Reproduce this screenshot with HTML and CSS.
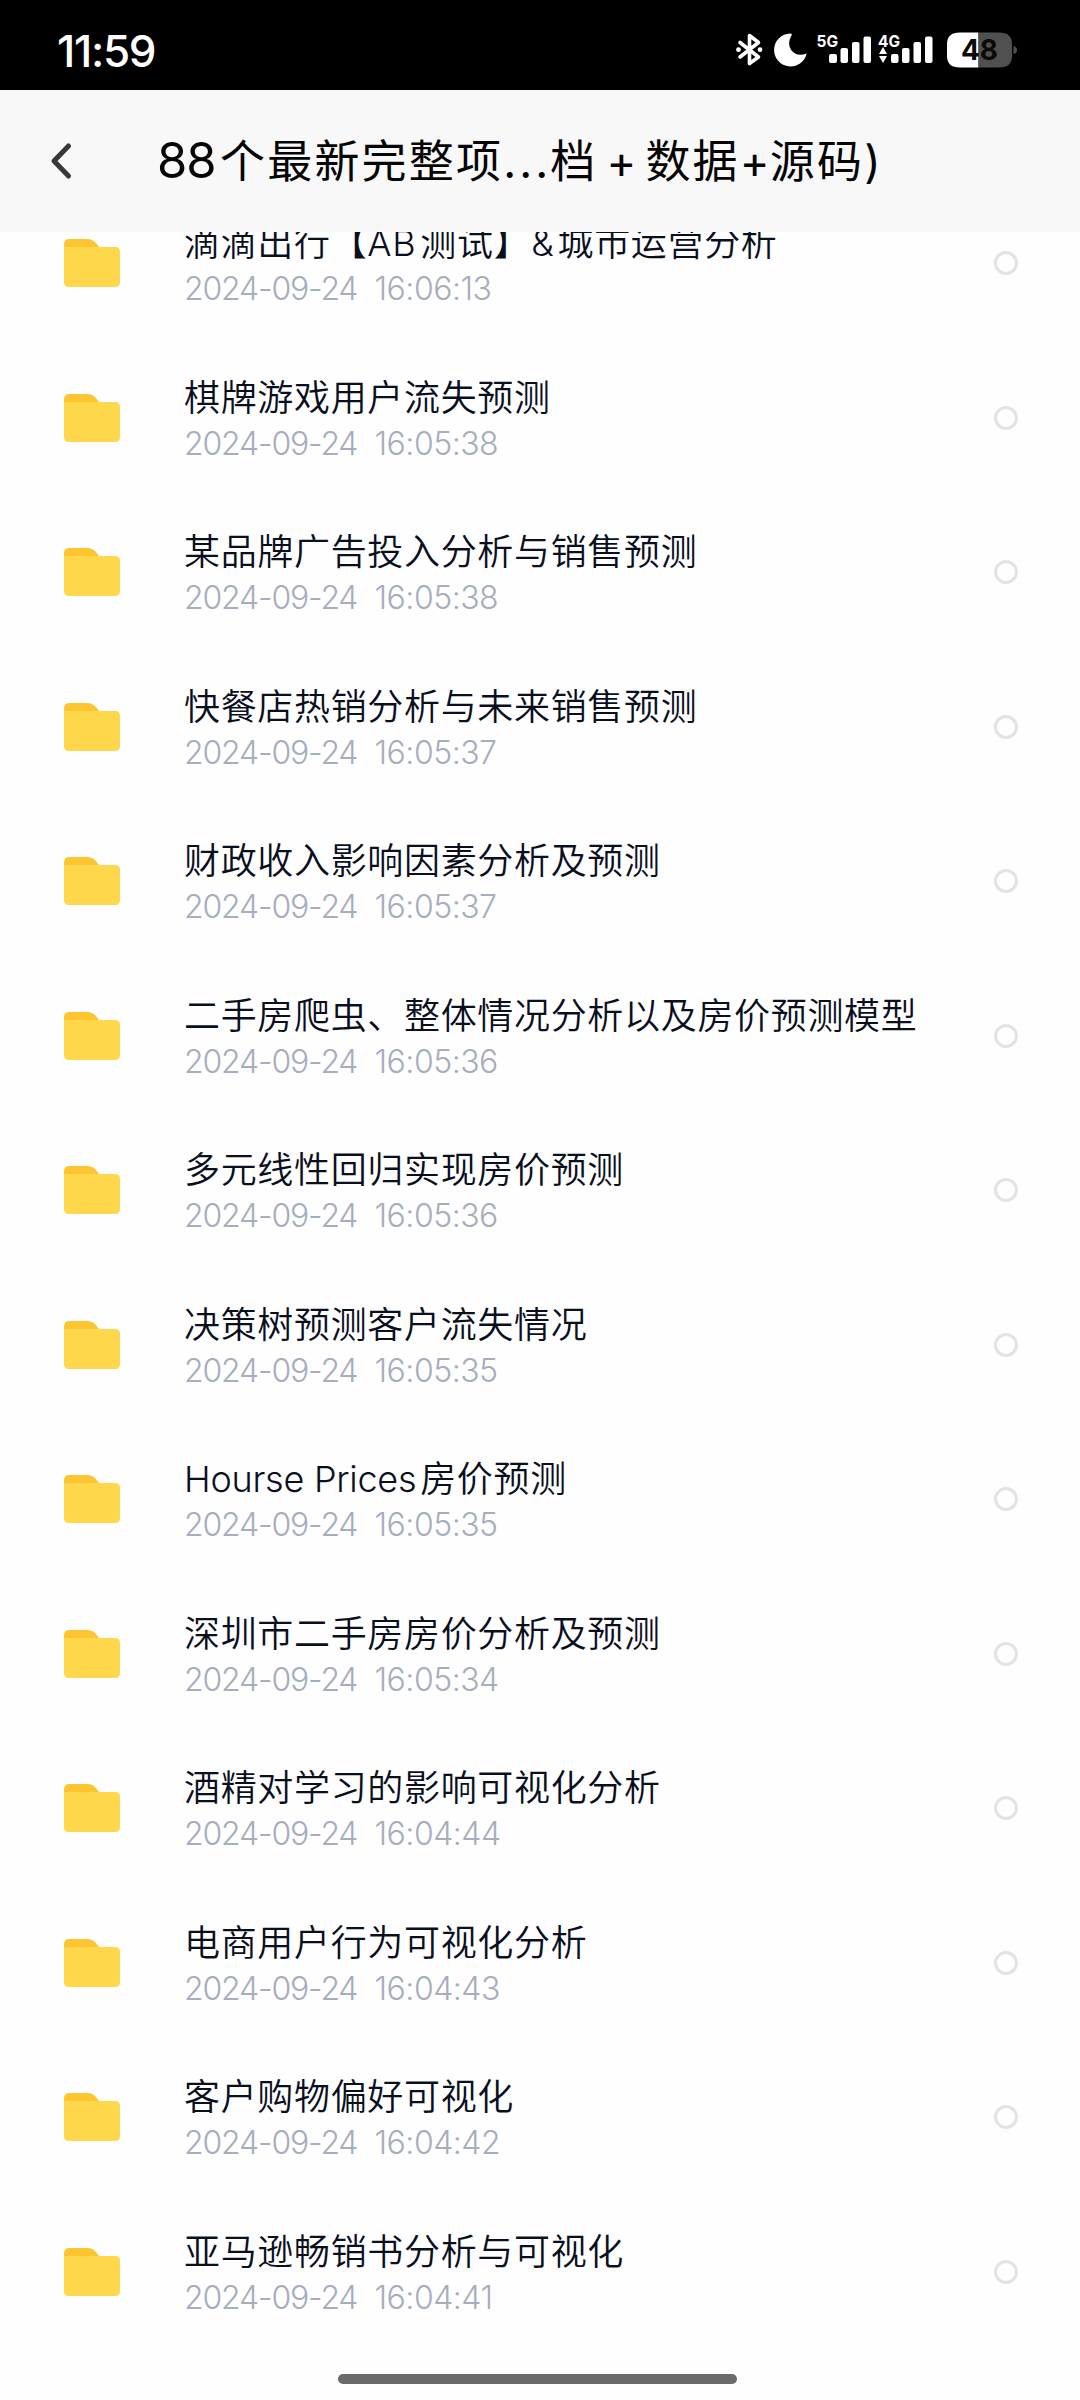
FILE: index.html
```html
<!DOCTYPE html>
<html lang="zh-CN">
<head>
<meta charset="utf-8">
<title>88个最新完整项目</title>
<link rel="stylesheet" href="styles.css">
</head>
<body>
<svg class="defs" width="0" height="0" aria-hidden="true">
  <symbol id="folder" viewBox="0 0 56 48">
    <path fill="#fdc630" d="M0 14V5.500Q0 0 5.500 0H24Q28 0 31 3L36 9V14Z"/>
    <path fill="#fed74b" d="M0 8H51Q56 8 56 13V43Q56 48 51 48H5Q0 48 0 43Z"/>
  </symbol>
</svg>
<div class="screen">
  <div class="status">
    <span class="clock">11:59</span>
    <svg class="indicators" width="300" height="40" viewBox="736 30 300 40">
      <g fill="none" stroke="#fff" stroke-width="3.600" stroke-linejoin="round" stroke-linecap="round">
        <path d="M740 42.500L758.500 57L749.500 63.500V35.500L758.500 42.500L740 57"/>
      </g>
      <circle cx="738.500" cy="49.700" r="2.400" fill="#fff"/><circle cx="760" cy="49.700" r="2.400" fill="#fff"/>
      <path fill="#fff" d="M790 33.500A16.500 16.500 0 1 0 806.700 53.500Q797 57 791.500 50.500Q786.500 43.500 791.500 35.500Q792.500 33.500 790 33.500Z"/>
      <g fill="#fff">
        <rect x="829" y="54" width="8" height="9" rx="2"/><rect x="840.500" y="48" width="7.500" height="15" rx="2"/><rect x="852" y="42" width="7.500" height="21" rx="2"/><rect x="863.500" y="36.500" width="7.500" height="26.500" rx="2"/>
        <rect x="891" y="54" width="7.500" height="9" rx="2"/><rect x="902" y="48" width="7.500" height="15" rx="2"/><rect x="913.500" y="42" width="7.500" height="21" rx="2"/><rect x="925" y="36.500" width="7.500" height="26.500" rx="2"/>
        <path d="M883 47L887 54H879ZM883 63L887 56H879Z"/>
        <text class="net" x="816.500" y="47" textLength="21.500" lengthAdjust="spacingAndGlyphs">5G</text>
        <text class="net" x="878" y="47" textLength="22" lengthAdjust="spacingAndGlyphs">4G</text>
      </g>
      <path fill="#fff" d="M978.500 32.500H960Q947 32.500 947 44V56Q947 67.500 960 67.500H978.500Z"/>
      <path fill="#505050" d="M978.500 32.500H999Q1012 32.500 1012 44V56Q1012 67.500 999 67.500H978.500Z"/>
      <path fill="#505050" d="M1013.500 46Q1017 47 1017 50T1013.500 54Z"/>
      <text class="level" x="961" y="59.500" textLength="37" lengthAdjust="spacingAndGlyphs">48</text>
    </svg>
  </div>
  <header class="bar">
    <svg class="back" width="24" height="40" viewBox="0 0 24 40"><path d="M19.500 5L5 20L19.500 35" fill="none" stroke="#383838" stroke-width="5" stroke-linecap="round" stroke-linejoin="round"/></svg>
    <h1 class="title"><span class="num">88</span><span>个最新完整项</span><span class="dots">...</span><span>档</span><span class="plus wide">+</span><span>数据</span><span class="plus">+</span><span>源码</span><span class="paren">)</span></h1>
  </header>
  <main class="list">
    <div class="row"><svg class="folder"><use href="#folder"/></svg><div class="info"><div class="name">滴滴出行【<span class="ab">AB</span>测试】<span class="amp">&amp;</span>城市运营分析</div><div class="date"><span>2024-09-24</span><span>16:06:13</span></div></div><i class="pick"></i></div>
    <div class="row"><svg class="folder"><use href="#folder"/></svg><div class="info"><div class="name">棋牌游戏用户流失预测</div><div class="date"><span>2024-09-24</span><span>16:05:38</span></div></div><i class="pick"></i></div>
    <div class="row"><svg class="folder"><use href="#folder"/></svg><div class="info"><div class="name">某品牌广告投入分析与销售预测</div><div class="date"><span>2024-09-24</span><span>16:05:38</span></div></div><i class="pick"></i></div>
    <div class="row"><svg class="folder"><use href="#folder"/></svg><div class="info"><div class="name">快餐店热销分析与未来销售预测</div><div class="date"><span>2024-09-24</span><span>16:05:37</span></div></div><i class="pick"></i></div>
    <div class="row"><svg class="folder"><use href="#folder"/></svg><div class="info"><div class="name">财政收入影响因素分析及预测</div><div class="date"><span>2024-09-24</span><span>16:05:37</span></div></div><i class="pick"></i></div>
    <div class="row"><svg class="folder"><use href="#folder"/></svg><div class="info"><div class="name">二手房爬虫、整体情况分析以及房价预测模型</div><div class="date"><span>2024-09-24</span><span>16:05:36</span></div></div><i class="pick"></i></div>
    <div class="row"><svg class="folder"><use href="#folder"/></svg><div class="info"><div class="name">多元线性回归实现房价预测</div><div class="date"><span>2024-09-24</span><span>16:05:36</span></div></div><i class="pick"></i></div>
    <div class="row"><svg class="folder"><use href="#folder"/></svg><div class="info"><div class="name">决策树预测客户流失情况</div><div class="date"><span>2024-09-24</span><span>16:05:35</span></div></div><i class="pick"></i></div>
    <div class="row"><svg class="folder"><use href="#folder"/></svg><div class="info"><div class="name"><span class="latin">Hourse Prices</span>房价预测</div><div class="date"><span>2024-09-24</span><span>16:05:35</span></div></div><i class="pick"></i></div>
    <div class="row"><svg class="folder"><use href="#folder"/></svg><div class="info"><div class="name">深圳市二手房房价分析及预测</div><div class="date"><span>2024-09-24</span><span>16:05:34</span></div></div><i class="pick"></i></div>
    <div class="row"><svg class="folder"><use href="#folder"/></svg><div class="info"><div class="name">酒精对学习的影响可视化分析</div><div class="date"><span>2024-09-24</span><span>16:04:44</span></div></div><i class="pick"></i></div>
    <div class="row"><svg class="folder"><use href="#folder"/></svg><div class="info"><div class="name">电商用户行为可视化分析</div><div class="date"><span>2024-09-24</span><span>16:04:43</span></div></div><i class="pick"></i></div>
    <div class="row"><svg class="folder"><use href="#folder"/></svg><div class="info"><div class="name">客户购物偏好可视化</div><div class="date"><span>2024-09-24</span><span>16:04:42</span></div></div><i class="pick"></i></div>
    <div class="row"><svg class="folder"><use href="#folder"/></svg><div class="info"><div class="name">亚马逊畅销书分析与可视化</div><div class="date"><span>2024-09-24</span><span>16:04:41</span></div></div><i class="pick"></i></div>
  </main>
  <footer class="nav"><div class="handle"></div></footer>
</div>
</body>
</html>
```
FILE: styles.css
```css
* { box-sizing: border-box; }
body { margin: 0; background: #fff; }
.defs { display: none; }
.screen {
  width: 1080px;
  height: 2400px;
  display: flex;
  flex-direction: column;
  background: #fefefe;
  font-family: Inter, "Noto Sans CJK SC", sans-serif;
  overflow: hidden;
}
.status {
  height: 90px;
  flex: none;
  padding: 0 44px 0 57px;
  display: flex;
  justify-content: space-between;
  align-items: center;
  background: #000;
  color: #fff;
}
.indicators { margin-top: 10px; }
.clock { font-size: 44px; font-weight: 500; line-height: 60px; padding-top: 11px; letter-spacing: -1.300px; }
.net { font-size: 16px; font-weight: 700; }
.level { font-size: 29px; font-weight: 700; fill: #0a0a0a; }
.bar {
  height: 142px;
  flex: none;
  display: flex;
  align-items: center;
  padding-left: 49px;
  background: #f8f8f8;
}
.back { flex: none; }
.title {
  margin: 0 0 0 84px;
  display: flex;
  align-items: baseline;
  font-size: 45px;
  font-weight: 400;
  line-height: 64px;
  letter-spacing: 2.200px;
  white-space: nowrap;
  color: #060606;
}
.num { width: 63px; font-size: 49px; letter-spacing: -1px; }
.dots { width: 47px; letter-spacing: 3px; }
.plus { width: 30px; letter-spacing: 0; }
.wide { width: 48px; text-align: center; }
.paren { letter-spacing: 0; }
.list { flex: none; height: 2118px; overflow: hidden; }
.row {
  height: 154.500px;
  display: flex;
  align-items: center;
  padding: 0 62px 0 64px;
}
.row:first-child { margin-top: -46px; }
.folder { width: 56px; height: 48px; flex: none; }
.info { flex: 1; margin-left: 64px; padding-top: 6px; }
.name {
  font-size: 36px;
  font-weight: 350;
  line-height: 46px;
  letter-spacing: 0.670px;
  white-space: nowrap;
  color: #0a0f1e;
}
.ab { margin-right: 4px; }
.amp { margin: 0 3px 0 1px; }
.latin { letter-spacing: -0.260px; margin-right: 4px; }
.date {
  display: flex;
  font-size: 32px;
  font-weight: 300;
  line-height: 46px;
  letter-spacing: -0.500px;
  color: #a6adbd;
}
.date span:first-child { width: 190.500px; letter-spacing: -1.150px; }
.pick { width: 24px; height: 24px; flex: none; border: 3px solid #e3e3e3; border-radius: 50%; }
.nav { flex: 1; display: flex; justify-content: center; align-items: flex-start; padding: 24px 6px 0 0; }
.handle { width: 399px; height: 10px; border-radius: 5px; background: #6a6a6a; }
```
